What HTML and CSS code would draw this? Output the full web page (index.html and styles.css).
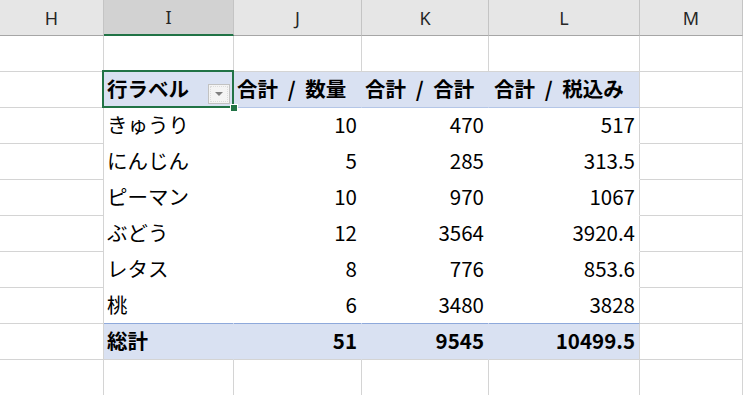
FILE: index.html
```html
<!DOCTYPE html>
<html lang="ja">
<head>
<meta charset="utf-8">
<title>ピボットテーブル</title>
<link rel="stylesheet" href="styles.css">
</head>
<body>
<div class="sheet">
  <!-- 列見出し -->
  <div class="col-head">H</div>
  <div class="col-head active">I</div>
  <div class="col-head">J</div>
  <div class="col-head">K</div>
  <div class="col-head">L</div>
  <div class="col-head">M</div>

  <!-- 空白行 -->
  <div class="cell"></div>
  <div class="cell"></div>
  <div class="cell"></div>
  <div class="cell"></div>
  <div class="cell"></div>
  <div class="cell"></div>

  <!-- ピボット見出し -->
  <div class="cell"></div>
  <div class="cell pv-head selected">行ラベル<span class="filter-btn"><span class="tri"></span></span></div>
  <div class="cell pv-head">合計 / 数量</div>
  <div class="cell pv-head">合計 / 合計</div>
  <div class="cell pv-head end">合計 / 税込み</div>
  <div class="cell"></div>

  <div class="cell"></div>
  <div class="cell pv-row">きゅうり</div>
  <div class="cell pv-row num">10</div>
  <div class="cell pv-row num">470</div>
  <div class="cell pv-row num end">517</div>
  <div class="cell"></div>

  <div class="cell"></div>
  <div class="cell pv-row">にんじん</div>
  <div class="cell pv-row num">5</div>
  <div class="cell pv-row num">285</div>
  <div class="cell pv-row num end">313.5</div>
  <div class="cell"></div>

  <div class="cell"></div>
  <div class="cell pv-row">ピーマン</div>
  <div class="cell pv-row num">10</div>
  <div class="cell pv-row num">970</div>
  <div class="cell pv-row num end">1067</div>
  <div class="cell"></div>

  <div class="cell"></div>
  <div class="cell pv-row">ぶどう</div>
  <div class="cell pv-row num">12</div>
  <div class="cell pv-row num">3564</div>
  <div class="cell pv-row num end">3920.4</div>
  <div class="cell"></div>

  <div class="cell"></div>
  <div class="cell pv-row">レタス</div>
  <div class="cell pv-row num">8</div>
  <div class="cell pv-row num">776</div>
  <div class="cell pv-row num end">853.6</div>
  <div class="cell"></div>

  <div class="cell"></div>
  <div class="cell pv-row last">桃</div>
  <div class="cell pv-row last num">6</div>
  <div class="cell pv-row last num">3480</div>
  <div class="cell pv-row last num end">3828</div>
  <div class="cell"></div>

  <!-- 総計 -->
  <div class="cell"></div>
  <div class="cell pv-total">総計</div>
  <div class="cell pv-total num">51</div>
  <div class="cell pv-total num">9545</div>
  <div class="cell pv-total num end">10499.5</div>
  <div class="cell"></div>

  <div class="cell"></div>
  <div class="cell"></div>
  <div class="cell"></div>
  <div class="cell"></div>
  <div class="cell"></div>
  <div class="cell"></div>
</div>
</body>
</html>
```

FILE: styles.css
```css
body {
    margin: 0;
    overflow: hidden;
    background: #fff;
    font-family: "Noto Sans CJK JP", "Noto Sans", sans-serif;
    color: #000;
}
.sheet {
    display: grid;
    grid-template-columns: 104px 130px 128px 127px 151px 1fr;
    grid-auto-rows: 36px;
}
.col-head {
    box-sizing: border-box;
    display: flex;
    align-items: center;
    justify-content: center;
    background: #e6e6e6;
    border-right: 1px solid #c4c4c4;
    border-bottom: 1px solid #a6a6a6;
    font-family: "Noto Sans", sans-serif;
    font-size: 18px;
    color: #262626;
}
.col-head.active {
    background: #d2d2d2;
    border-bottom: 2px solid #217346;
}
.cell {
    box-sizing: border-box;
    display: flex;
    align-items: center;
    padding: 0 4px 3px 3px;
    border-right: 1px solid #d4d4d4;
    border-bottom: 1px solid #d4d4d4;
    font-size: 20.5px;
    white-space: nowrap;
}
.num {
    justify-content: flex-end;
}
.pv-head {
    position: relative;
    background: #d9e1f2;
    border-right-color: #d9e1f2;
    border-bottom-color: #b4c6e7;
    font-weight: bold;
    word-spacing: 5px;
}
.pv-row {
    border-right-color: #fff;
    border-bottom-color: #fff;
}
.pv-row.last {
    border-bottom-color: #8ea9db;
}
.pv-total {
    background: #d9e1f2;
    border-right-color: #d9e1f2;
    font-weight: bold;
}
.pv-head.end, .pv-row.end, .pv-total.end {
    border-right-color: #d4d4d4;
}
.pv-head.end {
    padding-left: 5px;
}
/* 選択枠とフィルハンドル */
.selected::after {
    content: "";
    position: absolute;
    top: -2px;
    left: -2px;
    right: -1px;
    bottom: -1px;
    border: 2px solid #217346;
}
.selected::before {
    content: "";
    position: absolute;
    right: -5px;
    bottom: -5px;
    width: 6px;
    height: 6px;
    background: #217346;
    border: 1px solid #fff;
    z-index: 2;
}
.filter-btn {
    position: absolute;
    right: 3px;
    top: 12px;
    width: 22px;
    height: 20px;
    box-sizing: border-box;
    background: #f4f4f4;
    border: 1px solid #c2c2c2;
    outline: 1px dotted #dcdcdc;
    outline-offset: -3px;
    display: flex;
    align-items: center;
    justify-content: center;
}
.tri {
    width: 0;
    height: 0;
    border-left: 4px solid transparent;
    border-right: 4px solid transparent;
    border-top: 4px solid #808080;
}
```
